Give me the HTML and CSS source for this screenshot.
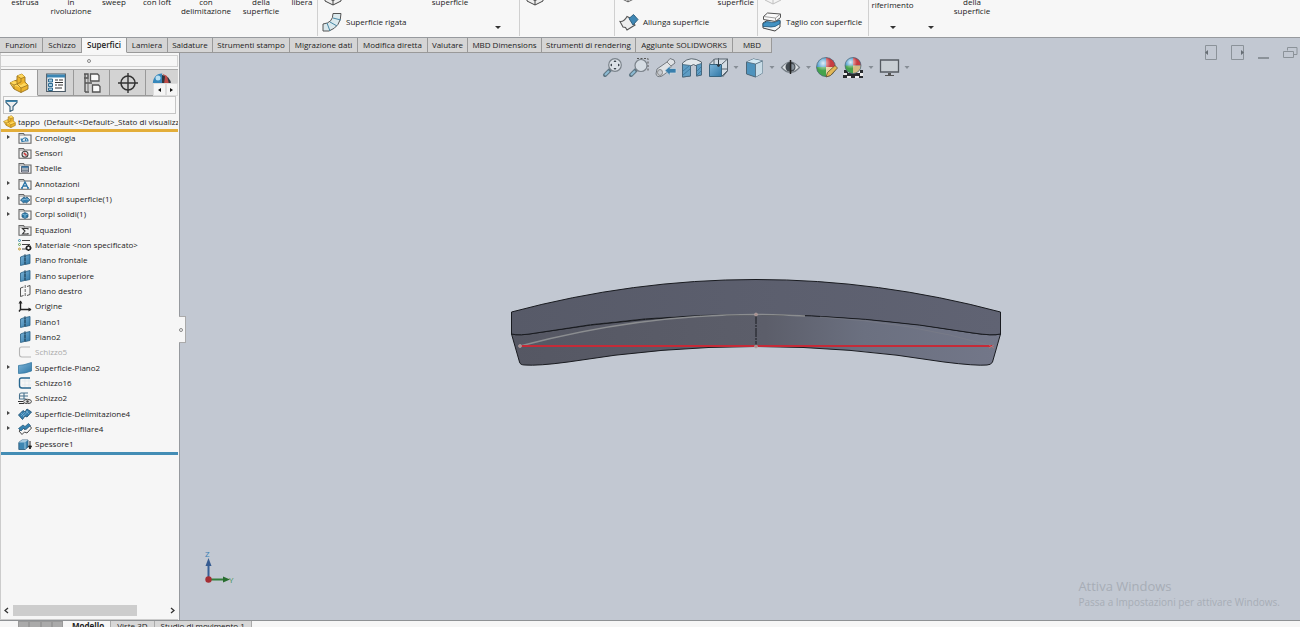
FILE: index.html
```
<!DOCTYPE html>
<html lang="it">
<head>
<meta charset="utf-8">
<title>tappo - SOLIDWORKS</title>
<link rel="stylesheet" href="styles.css">
</head>
<body>
<svg class="defs" aria-hidden="true">
  <defs>
    <linearGradient id="gBlue" x1="0" y1="0" x2="1" y2="1"><stop offset="0" stop-color="#7db4d8"/><stop offset="1" stop-color="#2f77a6"/></linearGradient>
    <radialGradient id="gBall" cx=".35" cy=".3" r=".8"><stop offset="0" stop-color="#fff" stop-opacity=".85"/><stop offset=".5" stop-color="#fff" stop-opacity="0"/></radialGradient>
  </defs>
  <symbol id="part" viewBox="0 0 20 20"><path d="M1 10l4-2 3-1V3l5-2 3 3v5l3 3v4l-7 3.500L5 16z" fill="#edb42c" stroke="#9a7420" stroke-width=".9"/><path d="M8 3l5-2 3 3-4 1.500zM1 10l4-2 3 1v2l4 1 3-2 4 2-7 3-5-2-2 1z" fill="#ffd75c"/><path d="M8 3l4 2.500 4-1.500M12 5.500V9l-4 2V7M12 19.500V15l7-3M1 10l4 2 3-1 4 4M5 12v4" fill="none" stroke="#9a7420" stroke-width=".8"/></symbol>
  <symbol id="folder" viewBox="0 0 14 12"><path d="M1 11.300V1.500h4.500l1 1.500h6.500v8.300z" fill="#f4f4f4" stroke="#666" stroke-width="1.100"/><path d="M1.500 3h5" stroke="#777" stroke-width=".8"/></symbol>
  <symbol id="hist" viewBox="0 0 14 12"><use href="#folder"/><path d="M4 9.500a3 3 0 1 1 6-1M3 6.500l1 3 3-.5M7.500 7v2h3" fill="none" stroke="#347cac" stroke-width="1.200"/></symbol>
  <symbol id="sens" viewBox="0 0 14 12"><use href="#folder"/><circle cx="7" cy="7.200" r="3" fill="#ddd" stroke="#444" stroke-width="1.100"/><path d="M6 6l2.500 2.500" stroke="#c33" stroke-width="1.600"/></symbol>
  <symbol id="tabl" viewBox="0 0 14 12"><use href="#folder"/><path d="M3.500 4.500h7v5.500h-7z" fill="#ccd5dc" stroke="#445" stroke-width=".8"/><path d="M3.500 5h7" stroke="#28699a" stroke-width="1.500"/><path d="M4 7h6M4 8.500h6" stroke="#456" stroke-width=".6"/></symbol>
  <symbol id="anno" viewBox="0 0 14 12"><use href="#folder"/><path d="M4 10l3-6 3 6M5.200 8h3.600M3 10h2M9 10h2" fill="none" stroke="#2c75a8" stroke-width="1.300"/></symbol>
  <symbol id="fsurf" viewBox="0 0 14 12"><use href="#folder"/><path d="M2.500 7L6 4l1.500 1L9 4l3 3-3.500 3L7 9 5.500 10z" fill="#347fae" stroke="#205277" stroke-width=".7"/><path d="M4 7l5-1 2 1" stroke="#a7cfe7" fill="none" stroke-width=".7"/></symbol>
  <symbol id="fsolid" viewBox="0 0 14 12"><use href="#folder"/><path d="M4 6l3-1.500L10 6v3l-3 1.500L4 9z" fill="#2c79a8" stroke="#205277" stroke-width=".7"/><path d="M4 6l3 1 3-1M7 7v3" stroke="#a5d0e8" stroke-width=".6" fill="none"/></symbol>
  <symbol id="equa" viewBox="0 0 14 12"><use href="#folder"/><path d="M10 5.500V4.500H4.500L7 7 4.500 10H10V9" fill="none" stroke="#333" stroke-width="1.100"/></symbol>
  <symbol id="mate" viewBox="0 0 14 12"><path d="M4 1.500h8M4 5.500h8M4 10h4" stroke="#444" stroke-width="1.100"/><circle cx="1.500" cy="1.500" r="1" fill="none" stroke="#388cad"/><circle cx="1.500" cy="5.500" r="1" fill="none" stroke="#5b9d59"/><circle cx="1.500" cy="10" r="1" fill="none" stroke="#c49a34"/><circle cx="10.500" cy="9" r="2" fill="#fff" stroke="#222" stroke-width="1.600"/><path d="M10.500 6v1M10.500 11v1M7.500 9h1M12.500 9h1M8.500 7l.7.700M12.500 7l-.7.700M8.500 11l.7-.7M12.500 11l-.7-.7" stroke="#222" stroke-width="1"/></symbol>
  <symbol id="plane" viewBox="0 0 14 12"><path d="M2.500 3l4-1.500v9l-4 1zM7.500 1.500L12 .5v9l-4.500 1z" fill="url(#gBlue)" stroke="#275e83" stroke-width=".8"/><path d="M7 0v12" stroke="#193f58" stroke-width=".8" stroke-dasharray="3 1"/></symbol>
  <symbol id="plane0" viewBox="0 0 14 12"><path d="M5.500 2l-3 1v8.500l3-1M9 1.500l3-1v9l-3 1" fill="none" stroke="#444" stroke-width=".9"/><path d="M7.200 0v12" stroke="#444" stroke-width=".8" stroke-dasharray="3 1"/></symbol>
  <symbol id="orig" viewBox="0 0 14 12"><path d="M2.500 1v8.500H13M2.500 9.500l-1.500 2" fill="none" stroke="#222" stroke-width="1.400"/><path d="M.5 3.500l2-3 2 3zM10.500 7.500l3 2-3 2z" fill="#222"/></symbol>
  <symbol id="sk" viewBox="0 0 14 12"><path d="M4 4h9M4 8h9M7 2v8M11 2v8" stroke="#dce6ed" stroke-width=".6"/><path d="M12 1H3.500Q1.500 1 1.500 3v5.500q0 2.500 2.500 2.500h9" fill="none" stroke="#286790" stroke-width="1.400"/></symbol>
  <symbol id="sk0" viewBox="0 0 14 12"><path d="M12 1H3.500Q1.500 1 1.500 3v5.500q0 2.500 2.500 2.500h9" fill="none" stroke="#b5b5b5" stroke-width="1.100"/></symbol>
  <symbol id="sk2" viewBox="0 0 14 12"><path d="M10 1H3Q1.500 1 1.500 3v4h7M6 1v6M2 4h8" fill="none" stroke="#47718c" stroke-width="1.100"/><path d="M0 9.500h5M1 11.500h5" stroke="#333" stroke-width="1.200"/><ellipse cx="9.500" cy="9.500" rx="4" ry="2.200" fill="#ddd" stroke="#444" stroke-width=".9"/><circle cx="9.500" cy="9.500" r="1.200" fill="#444"/></symbol>
  <symbol id="surf" viewBox="0 0 14 12"><path d="M.5 3.500Q5 3.500 13.500.5v8.500Q7 11.500.5 11.500z" fill="url(#gBlue)" stroke="#3579a2" stroke-width=".8"/></symbol>
  <symbol id="bound" viewBox="0 0 14 12"><path d="M.5 7L5 2.500l2 1.500 2-3L13.500 4 9 9 7 8l-2.500 3.500z" fill="#357fae" stroke="#235474" stroke-width=".9"/><path d="M3 8l4-4M5 9l5-6M3 5l3 3M8 3l3 3" stroke="#91bdd9" stroke-width=".6"/></symbol>
  <symbol id="trim" viewBox="0 0 14 12"><path d="M1 8l4-3 2 1.500L11 2l2.500 3L9 10 6.500 9 4 11.500z" fill="#f4f4f4" stroke="#333" stroke-width=".9"/><path d="M.5 5.500L5 2l2 1.500L10.500.5l2 2L8 6.500 5.500 5.500 3 8z" fill="#3682b0" stroke="#235474" stroke-width=".7"/></symbol>
  <symbol id="thick" viewBox="0 0 14 12"><path d="M.8 4.500L4 2h6v7l-3 2.500H.8z" fill="#3d86b2" stroke="#285776" stroke-width=".8"/><path d="M.8 4.500L4 2h6L7 4.500z" fill="#a8cbe0"/><path d="M7 4.500V11" stroke="#bddbea" stroke-width=".8"/><path d="M12 3v6M10.500 8l1.500 3 1.500-3z" fill="#222" stroke="#222"/></symbol>
  <symbol id="box" viewBox="0 0 18 12"><path d="M1 3l8 3.500L17 3v4l-8 4-8-4z" fill="#eee" stroke="#444" stroke-width="1"/><path d="M9 6.500V11" stroke="#444"/></symbol>
  <symbol id="ext" viewBox="0 0 20 18"><path d="M1 8.500Q5 9 8 3.500l3 1.500 5 7-8 5-1.500-2.500L4 14z" fill="#eee" stroke="#555" stroke-width="1.100"/><path d="M10 5.500L14.500 1.500l4.500 5-5 5.500z" fill="#3f87b4" stroke="#275877" stroke-width=".9"/></symbol>
</svg>

<div class="app">
  <header class="ribbon">
    <div class="group surfaces">
      <button class="tall"><span>estrusa</span></button>
      <button class="tall"><span>in<br>rivoluzione</span></button>
      <button class="tall"><span>sweep</span></button>
      <button class="tall"><span>con loft</span></button>
      <button class="tall"><span>con<br>delimitazione</span></button>
      <button class="tall"><span>della<br>superficie</span></button>
      <button class="tall"><span>libera</span></button>
    </div>
    <div class="group g2">
      <svg class="cut" aria-hidden="true"><use href="#box"/></svg>
      <button class="tall"><span>superficie</span></button>
      <button class="row"><svg width="20" height="20" viewBox="0 0 20 20"><path d="M11 1.500h8q0 13-12 17.500H1v-7q10-1 10-10.500z" fill="#dbe9ed" stroke="#555"/><path d="M11 6l8 2M8 10l7 4M5 11l3 8" stroke="#4788a5" fill="none"/></svg>Superficie rigata</button>
      <i class="caret"></i>
    </div>
    <div class="group g3"><svg class="cut" aria-hidden="true"><use href="#box"/></svg></div>
    <div class="group g4">
      <svg class="cut small" aria-hidden="true"><use href="#box"/></svg>
      <button class="tall"><span>superficie</span></button>
      <button class="row"><svg width="20" height="18"><use href="#ext"/></svg>Allunga superficie</button>
    </div>
    <div class="group g5">
      <svg class="cut faint" aria-hidden="true"><use href="#box"/></svg>
      <button class="row"><svg width="20" height="20" viewBox="0 0 20 20"><path d="M1 11l5-3 12 1v6l-5 4-12-3z" fill="#f2f6f8" stroke="#444"/><path d="M1 11.500q4-3 7-1.500t10-2v3.500q-5 4-9 3.500t-8-.5z" fill="#4292c2" stroke="#21577b" stroke-width=".8"/><path d="M1.500 4.500l4-3.500 13 1v3.500l-5 4-12-2z" fill="#fafafa" stroke="#555"/><path d="M1.500 4.500l12 1.500 5-4M13.500 6v3" fill="none" stroke="#777" stroke-width=".7"/></svg>Taglio con superficie</button>
    </div>
    <div class="group g6">
      <button class="refs"><span>riferimento</span><i class="caret"></i></button>
      <button class="curves" aria-label="Curve"><i class="caret"></i></button>
      <button class="tall"><span>della<br>superficie</span></button>
    </div>
  </header>

  <nav class="tabs">
    <button>Funzioni</button><button>Schizzo</button><button class="active">Superfici</button><button>Lamiera</button><button>Saldature</button><button>Strumenti stampo</button><button>Migrazione dati</button><button>Modifica diretta</button><button>Valutare</button><button>MBD Dimensions</button><button>Strumenti di rendering</button><button>Aggiunte SOLIDWORKS</button><button>MBD</button>
  </nav>

  <main class="work">
    <aside class="panel">
      <div class="grip"><i></i></div>
      <div class="ptabs">
        <button class="active" aria-label="Albero di disegno"><svg width="20" height="20"><use href="#part"/></svg></button>
        <button aria-label="Proprietà"><svg width="20" height="20" viewBox="0 0 20 20"><path d="M.7 1h18.600v17.500H.7z" fill="#fff" stroke="#4a5965" stroke-width="1.200"/><path d="M1 1.500h18v3H1z" fill="#3a86b4"/><path d="M2.500 6h4v3h-4zM2.500 10.500h4v3h-4zM2.500 15h4v2.500h-4z" fill="#a4cce2" stroke="#2e6b91"/><path d="M9 7h3m1 0h4M9 9.500h8M9 12h2m1 0h5M9 15h7" stroke="#333" stroke-width="1.100"/></svg></button>
        <button aria-label="Configurazioni"><svg width="18" height="20" viewBox="0 0 18 20"><path d="M2 1v18M1 1h4v4H1M2 10h7M2 19h4" fill="none" stroke="#555" stroke-width="1.400"/><path d="M7.500 1h7l1.500 1.500V8H7.500zM9.500 12h6l1.500 1.500V19H9.500z" fill="#fafafa" stroke="#555" stroke-width="1.300"/><path d="M2 5h3v13" fill="none" stroke="#666"/></svg></button>
        <button aria-label="DimXpert"><svg width="20" height="20" viewBox="0 0 20 20"><circle cx="10" cy="10" r="7" fill="none" stroke="#333" stroke-width="1.500"/><path d="M10 0v20M0 10h20" stroke="#333" stroke-width="1.400"/></svg></button>
        <button class="ball" aria-label="Visualizzazione"><svg width="20" height="12" viewBox="0 0 20 12"><path d="M1 12a9 9 0 0 1 18 0z" fill="#303640"/><path d="M1 12a9 9 0 0 1 9-10.500V12z" fill="#3687bb"/><path d="M10 1.500l3 3-1 7.500h5l-2-8z" fill="#bd4a47"/><circle cx="6" cy="6" r="2.500" fill="#b9dff2"/></svg></button>
        <div class="pager"><button aria-label="Precedente"><i class="left"></i></button><button aria-label="Successivo"><i class="right"></i></button></div>
      </div>
      <label class="filter"><svg width="13" height="13" viewBox="0 0 13 13"><path d="M1 1.500h11v2L8 7.500V11l-3 1.500v-5L1 3.500z" fill="#eee" stroke="#355e78" stroke-width="1.100"/><path d="M1 1.500h11v1.500H1z" fill="#3e86ae"/></svg><input aria-label="Filtro"></label>
      <div class="root"><svg width="13" height="13"><use href="#part"/></svg><span>tappo&nbsp; (Default&lt;&lt;Default&gt;_Stato di visualizzazione 1&gt;)</span></div>
      <ul class="tree">
        <li class="more"><svg><use href="#hist"/></svg>Cronologia</li>
        <li><svg><use href="#sens"/></svg>Sensori</li>
        <li><svg><use href="#tabl"/></svg>Tabelle</li>
        <li class="more"><svg><use href="#anno"/></svg>Annotazioni</li>
        <li class="more"><svg><use href="#fsurf"/></svg>Corpi di superficie(1)</li>
        <li class="more"><svg><use href="#fsolid"/></svg>Corpi solidi(1)</li>
        <li><svg><use href="#equa"/></svg>Equazioni</li>
        <li><svg><use href="#mate"/></svg>Materiale &lt;non specificato&gt;</li>
        <li><svg><use href="#plane"/></svg>Piano frontale</li>
        <li><svg><use href="#plane"/></svg>Piano superiore</li>
        <li><svg><use href="#plane0"/></svg>Piano destro</li>
        <li><svg><use href="#orig"/></svg>Origine</li>
        <li><svg><use href="#plane"/></svg>Piano1</li>
        <li><svg><use href="#plane"/></svg>Piano2</li>
        <li class="off"><svg><use href="#sk0"/></svg>Schizzo5</li>
        <li class="more"><svg><use href="#surf"/></svg>Superficie-Piano2</li>
        <li><svg><use href="#sk"/></svg>Schizzo16</li>
        <li><svg><use href="#sk2"/></svg>Schizzo2</li>
        <li class="more"><svg><use href="#bound"/></svg>Superficie-Delimitazione4</li>
        <li class="more"><svg><use href="#trim"/></svg>Superficie-rifilare4</li>
        <li><svg><use href="#thick"/></svg>Spessore1</li>
      </ul>
      <div class="scroll"><svg width="5" height="7" viewBox="0 0 5 7"><path d="M4 1L1 3.500 4 6" fill="none" stroke="#333" stroke-width="1.300"/></svg><div class="track"><div class="thumb"></div></div><svg width="5" height="7" viewBox="0 0 5 7"><path d="M1 1l3 2.500L1 6" fill="none" stroke="#333" stroke-width="1.300"/></svg></div>
    </aside>

    <section class="view">
      <div class="handle"><i></i></div>
      <svg class="hud" width="310" height="24" viewBox="601 56 310 24">
        <g fill="none">
          <path d="M605 75l5-5" stroke="#5d7482" stroke-width="4" stroke-linecap="round"/><path d="M605 75l4-4" stroke="#8dbbd3" stroke-width="2"/><circle cx="615" cy="65" r="6.300" fill="#dce2e8" stroke="#7b838b" stroke-width="1.200"/><path d="M615 60l-1.500 2h3zM615 70l-1.500-2h3zM610 65l2-1.500v3zM620 65l-2-1.500v3z" fill="#39424a"/>
          <path d="M631 75l5-5" stroke="#5d7482" stroke-width="4" stroke-linecap="round"/><path d="M631 75l4-4" stroke="#8dbbd3" stroke-width="2"/><path d="M637 58.500h11v13" stroke="#555" stroke-dasharray="2 1.500"/><circle cx="641" cy="65.500" r="6" fill="#d5dce3" stroke="#7b838b" stroke-width="1.200"/>
          <path d="M657 69l10-7 3-3.500 4 1.500 1 3-4 3-1 4-8 6q-5 2-6-2z" fill="#dfe2e5" stroke="#737980"/><path d="M667 62l4 4" stroke="#888"/><ellipse cx="660" cy="72.500" rx="2.500" ry="3" fill="#c5cad0" stroke="#888"/><path d="M665 70.500l5-4.500v2.500h6v4.500h-6v2.500z" fill="#397fad" stroke="#cfdbe3" stroke-width=".7"/>
          <path d="M682.500 63q8-8 19-1v13l-5 1V66q-3-3-6 0v10l-8 1z" fill="#e3e8eb" stroke="#5c6871"/><path d="M682.500 64.500l8 1V76l-8 1zM696.500 65l5-1.500V75l-5 1z" fill="#5e9dc4" stroke="#416278" stroke-width=".8"/><path d="M683 71l6-5M683 75l7-6M697 71l4-4M697 75l4-4" stroke="#356f96" stroke-width=".7"/>
          <path d="M709.500 64l5-5h13v12l-5 6" fill="#d5dde4" stroke="#58646e"/><path d="M722 64l5.500-5M722 69h5M722 76l5-5M714 59v5M718.500 58v9" stroke="#58646e"/><path d="M709.500 64.500h12v12h-12z" fill="url(#gBlue)" stroke="#386580"/><path d="M718.500 60v6M716.500 64l2 3 2-3" stroke="#303b43"/>
          <path d="M746.500 62l7-3 9 2v12l-7 4-9-3z" fill="#4e93bd" stroke="#4c6677"/><path d="M746.500 62l7-3 9 2-7 3z" fill="#d4e9f3"/><path d="M755.500 64l7-3v12l-7 4z" fill="#c8dce7"/><path d="M746.500 62l9 2v13M755.500 64l7-3" stroke="#4c6677" stroke-width=".8"/>
          <path d="M781.500 67.500q9-11 18 0-9 10-18 0z" fill="#dce0e4" stroke="#777f87" stroke-width="1.200"/><circle cx="790.500" cy="67" r="5" fill="#424950"/><path d="M790.500 60v14" stroke="#222" stroke-width="1.500"/><path d="M791.500 64a3 3 0 0 1 0 6z" fill="#87919b"/>
        </g>
        <circle cx="826" cy="67" r="9.500" fill="#348fc8"/><path d="M826 57.500a9.500 9.500 0 0 1 9.500 9.500H826z" fill="#c83c41"/><path d="M816.500 67H826v9.500a9.500 9.500 0 0 1-9.500-9.500z" fill="#45a34c"/><path d="M826 67h9.500l-9.500 9.500z" fill="#e7d5a3"/><circle cx="826" cy="67" r="9.500" fill="url(#gBall)" stroke="#526674" stroke-width=".7"/><path d="M826 77l1.500-4.500 7.500-7 2.500 2.500-7 7.500z" fill="#e3b856" stroke="#5e4b2c" stroke-width=".8"/>
        <path d="M844 70h19v8h-20z" fill="#eee"/><path d="M844 70h4v3h4v-3h4v3h4v-3h3v3h-3v3h3v2h-4v-2h-4v2h-4v-2h-4v2h-4v-3h4v-2h-3z" fill="#282b2e"/><circle cx="853" cy="65.500" r="8" fill="#348fc8"/><path d="M853 57.500a8 8 0 0 1 8 8h-8z" fill="#c83c41"/><path d="M845 65.500h8v8a8 8 0 0 1-8-8z" fill="#45a34c"/><path d="M853 65.500h8a8 8 0 0 1-8 8z" fill="#d5bc83"/><circle cx="853" cy="65.500" r="8" fill="url(#gBall)" stroke="#526674" stroke-width=".7"/>
        <path d="M880.500 60h18v12h-18z" fill="#c9cfd4" stroke="#555b61" stroke-width="1.300"/><path d="M888 73h3v2h3v1h-9v-1h3z" fill="#555"/>
        <path d="M733.500 66h5l-2.500 3zM769.500 66h5l-2.500 3zM806 66h5l-2.500 3zM868.500 66h5l-2.500 3zM904.500 66h5l-2.500 3z" fill="#868d95"/>
      </svg>
      <svg class="win" width="92" height="16" viewBox="1204 45 92 16" fill="none" stroke="#8b9299"><path d="M1205.500 45.500h11v14h-11zM1231.500 45.500h12v14h-12z"/><path d="M1208 50v5l-3-2.500zM1241 50v5l3-2.500z" fill="#666d74" stroke="none"/><path d="M1258 58h11" stroke-width="2"/><path d="M1287.500 50.500v-3H1297v7h-3M1283.500 51.500h10v6h-10z"/></svg>
      <svg class="model" viewBox="509 276 494 92" role="img" aria-label="Modello tappo">
        <defs>
          <linearGradient id="top"><stop offset="0" stop-color="#575a68"/><stop offset="1" stop-color="#606373"/></linearGradient>
          <linearGradient id="low"><stop offset="0" stop-color="#555763"/><stop offset=".52" stop-color="#5c5e6a"/><stop offset=".72" stop-color="#6b7080"/><stop offset="1" stop-color="#737789"/></linearGradient>
        </defs>
        <path d="M511.500 334Q519 336 536 333Q645 315 756 314.500T973 333Q993 336 1000.500 334L992.500 362Q991 365 987 365Q976 366 944 362Q850 346.500 756 346.500T568 362Q538 366 525 365Q520 365 519.500 362z" fill="url(#low)" stroke="#191b20"/>
        <path d="M511.500 312Q633 279.500 756 279.500T1000.500 312V334Q993 336 973 333Q867 315 756 314.500T536 333Q519 336 511.500 334z" fill="url(#top)" stroke="#191b20"/>
        <path d="M520 346Q640 314.500 756 314.500 780 314.500 805 316" fill="none" stroke="#8b8d90" stroke-width="1.500"/><path d="M820 317Q910 322 992 346" fill="none" stroke="#7c7e88" stroke-width=".6"/>
        <path d="M520 346h472" stroke="#c42b38" stroke-width="2"/><path d="M756 315v31" stroke="#191b20" stroke-dasharray="9 1 2 1"/>
        <g fill="#a88e8e" stroke="#b3a5a2" stroke-width=".7"><circle cx="520" cy="346" r="1.500"/><circle cx="756" cy="346.500" r="1.500"/><circle cx="756" cy="314.500" r="1.500"/><path d="M989 345l5 3M994 345l-5 3" stroke="#c87472"/></g>
      </svg>
      <svg class="triad" width="34" height="36" viewBox="202 549 34 36"><path d="M208.500 579v-15" stroke="#365f96" stroke-width="2"/><path d="M205.500 566l3-8 3 8z" fill="#355b91"/><path d="M208 579.500h16" stroke="#347e3b" stroke-width="2"/><path d="M223 576.500l7 3-7 3z" fill="#286d30"/><circle cx="208.500" cy="579.500" r="3.200" fill="#a52e34"/><text x="205" y="557" fill="#397fb5">Z</text><text x="229" y="583" fill="#429355">Y</text></svg>
      <div class="notice"><strong>Attiva Windows</strong><span>Passa a Impostazioni per attivare Windows.</span></div>
    </section>
  </main>

  <footer class="bottom"><div class="steps"><i></i><i></i><i></i><i></i></div><button class="active">Modello</button><button>Viste 3D</button><button>Studio di movimento 1</button></footer>
</div>
</body>
</html>
```
FILE: styles.css
```
* { box-sizing: border-box; }
body { margin: 0; font: 8px/10px "Open Sans", "Noto Sans", sans-serif; color: #222; }
button { font: inherit; color: inherit; background: none; border: 0; padding: 0; margin: 0; }
svg { flex: none; display: block; }
.defs { position: absolute; width: 0; height: 0; }
.app { height: 100vh; display: flex; flex-direction: column; overflow: hidden; background: #c2c8d2; }

.ribbon { flex: none; height: 38px; display: grid; grid-template-columns: 318px 202px 95px 143px 111px 1fr; background: #f7f7f7; border-bottom: 1px solid #979a9e; overflow: hidden; }
.group { border-right: 1px solid #d0d0d0; height: 36px; display: grid; grid-template-rows: 12px 24px; }
.group:last-child { border: 0; }
.tall { display: flex; justify-content: center; align-items: flex-start; line-height: 9px; text-align: center; }
.tall span { margin-top: -3px; }
.surfaces { grid-template-rows: 36px; grid-template-columns: 50px 42px 44px 42px 56px 54px 28px; }
.g2, .g4 { grid-template-columns: 96px 1fr; }
.g2 .tall { padding-right: 33px; }
.g4 .tall { justify-content: flex-end; padding-right: 3px; }
.cut { width: 18px; height: 12px; margin: -6px 0 0 6px; }
.cut.small { width: 14px; margin-top: -8px; }
.cut.faint { opacity: .3; margin-top: -7px; }
.row { display: flex; align-items: center; gap: 4px; padding-left: 4px; grid-row: 2; grid-column: 1; white-space: nowrap; justify-self: start; height: 20px; }
.caret { border: 3px solid transparent; border-top-color: #333; border-bottom: 0; width: 6px; height: 3px; }
.g2 .caret { margin: 14px 0 0 81px; }
.g6 { grid-template-rows: 36px; grid-template-columns: 47px 29px 54px; }
.refs, .curves { display: flex; flex-direction: column; align-items: center; }
.refs .caret { margin-top: 16px; }
.curves .caret { margin-top: 26px; }

.tabs { flex: none; display: grid; height: 15px; grid-template-columns: 43px 39px 45px 41px 45px 77px 68px 70px 40px 74px 94px 97px 39px; }
.tabs button { background: #d5d5d5; border-right: 1px solid #999; border-bottom: 1px solid #999; white-space: nowrap; }
.tabs .active { background: #f7f7f7; font-weight: 600; border-bottom-color: #f7f7f7; }

.work { flex: 1; min-height: 0; display: flex; }
.panel { width: 180px; flex: none; display: flex; flex-direction: column; background: #f6f6f6; border-right: 1px solid #96999e; border-left: 1px solid #ccc; padding: 2px 1px 0 0; overflow: hidden; }
.grip { height: 12px; flex: none; border: 1px solid #d2d2d2; border-left: 0; display: flex; align-items: center; justify-content: center; }
.grip i, .handle i { width: 4px; height: 4px; border: 1px solid #888; border-radius: 50%; }
.ptabs { margin-top: 2px; flex: none; height: 27px; display: grid; grid-template-columns: 37px 36px 36px 36px 1fr; position: relative; border-top: 1px solid #aaa; }
.ptabs > button { display: flex; align-items: center; justify-content: center; background: #d3d3d3; border-right: 1px solid #999; border-bottom: 1px solid #999; }
.ptabs > .active { background: #f6f6f6; border-bottom-color: #f6f6f6; }
.ptabs > .ball { align-items: flex-start; border-right: 0; padding-top: 2px; }
.pager { position: absolute; right: 0; bottom: 0; width: 25px; height: 13px; display: grid; grid-template-columns: 1fr 1fr; background: #f5f5f5; }
.pager button { display: flex; align-items: center; justify-content: center; border: 1px solid #ddd; }
.left, .right { border: 2px solid transparent; }
.left { border-right: 3px solid #111; border-left: 0; }
.right { border-left: 3px solid #111; border-right: 0; }
.filter { flex: none; height: 18px; margin: 0 2px; display: flex; align-items: center; padding-left: 1px; border: 1px solid #c5c5c5; background: #f9f9f9; }
.filter input { flex: 1; min-width: 0; border: 0; background: none; outline: 0; padding: 0; font: inherit; }
.root { flex: none; height: 18px; display: flex; align-items: center; gap: 2px; padding-left: 2px; border-bottom: 3px solid #e3ae3a; overflow: hidden; white-space: nowrap; }
.root span { overflow: hidden; }
.tree { list-style: none; margin: -2px 0 0; padding: 0; height: 325px; flex: none; display: grid; grid-auto-rows: 1fr; border-bottom: 3px solid #438db5; }
.tree li { display: flex; align-items: center; gap: 3px; padding-left: 17px; white-space: nowrap; position: relative; }
.tree svg { width: 14px; height: 12px; }
.tree .more::before { content: ""; position: absolute; left: 6px; top: 5px; border: 2px solid transparent; border-left: 3px solid #444; border-right: 0; }
.tree .off { color: #aaa; }
.scroll { margin-top: auto; flex: none; height: 15px; display: flex; align-items: flex-start; gap: 4px; padding: 0 3px; border-bottom: 1px solid #ccc; }
.scroll svg { margin-top: 2px; }
.track { flex: 1; height: 11px; padding-right: 29px; }
.thumb { height: 100%; background: #cdcdcd; }

.view { flex: 1; min-width: 0; position: relative; }
.handle { position: absolute; left: -1px; top: 263px; width: 7px; height: 27px; background: #f6f6f6; border: 1px solid #aaa; border-left: 0; display: flex; align-items: center; }
.hud { position: absolute; left: 421px; top: 3px; }
.win { position: absolute; right: 4px; top: -8px; overflow: visible; }
.model { position: absolute; left: 329px; top: 223px; width: 494px; height: 92px; }
.triad { position: absolute; left: 22px; bottom: 35px; font: 8px "Open Sans", sans-serif; }
.notice { position: absolute; right: 20px; bottom: 11px; display: flex; flex-direction: column; color: #a7adb6; font-size: 10px; line-height: 14px; }
.notice strong { font-weight: 400; font-size: 13px; line-height: 18px; }

.bottom { flex: none; height: 7px; display: flex; background: #f6f6f6; border-top: 1px solid #8e9194; padding-left: 18px; overflow: hidden; }
.bottom button { height: 8px; line-height: 7px; padding: 0 6px; background: #d7d7d7; border-right: 1px solid #aaa; white-space: nowrap; }
.bottom .active { background: #f6f6f6; font-weight: 700; padding-left: 9px; }
.steps { width: 45px; display: grid; grid-template-columns: repeat(4, 1fr); background: #aaa; }
.steps i { border: 1px solid #999; border-bottom: 0; }
```
